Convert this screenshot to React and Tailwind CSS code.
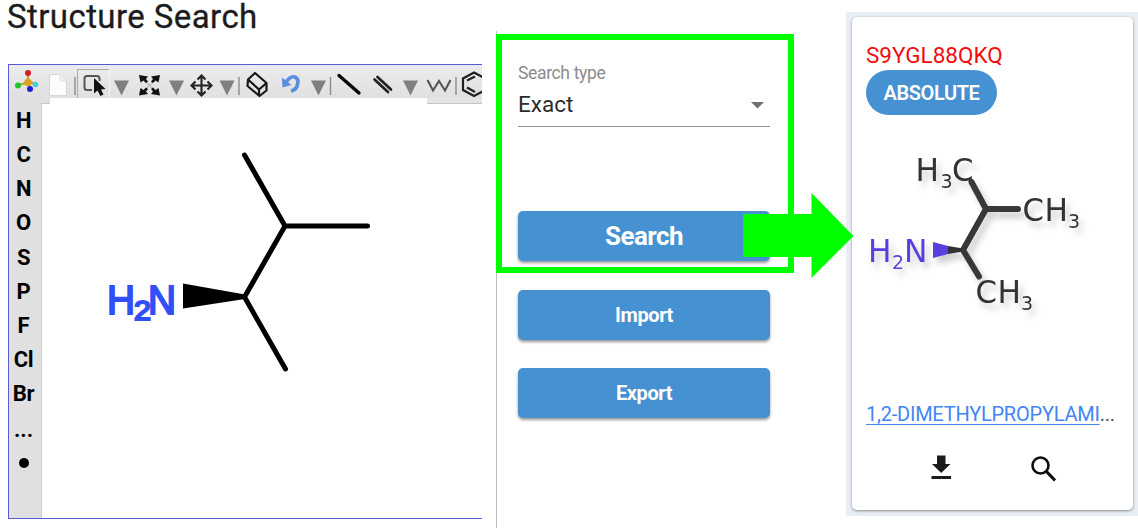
import React from "react";

const ELEMENTS = ["H", "C", "N", "O", "S", "P", "F", "Cl", "Br"];

function Tool({ x, w, children, className = "" }) {
  return (
    <svg className={`block shrink-0 ${className}`} width={w} height="33" viewBox={`${x} 65 ${w} 33`} fill="none">
      {children}
    </svg>
  );
}

function Arrow({ x, w, at }) {
  return (
    <Tool x={x} w={w}>
      <path d={`M${at - 7.5} 80.500h15L${at} 95.500z`} fill="#808080" />
    </Tool>
  );
}

function Sep({ x, w, at }) {
  return (
    <Tool x={x} w={w}>
      <path d={`M${at} 77v18`} stroke="#8b8b8b" strokeWidth="1.4" />
    </Tool>
  );
}

function Toolbar() {
  return (
    <div className="flex h-[33px] bg-linear-to-b from-[#ececec] to-[#e0e0e0]">
      <Tool x={9} w={37}>
        <path d="M28 82V73M28 82L18 85.500M28 82L36 84M28 82L30 89" stroke="#c4a12b" strokeWidth="2.200" />
        <circle cx="28" cy="73" r="3" fill="#d41b24" />
        <circle cx="28" cy="82.500" r="3.800" fill="#d9a51c" />
        <circle cx="18" cy="85.500" r="3" fill="#20c42c" />
        <circle cx="35.500" cy="84.500" r="2.800" fill="#3fd0dc" />
        <circle cx="30" cy="89" r="3" fill="#1a1fd0" />
      </Tool>
      <Tool x={46} w={26}>
        <path d="M49.500 74.500H60L66.500 81V95.500H49.500z" fill="#fcfcfc" stroke="#d6d6d6" strokeLinejoin="round" />
        <path d="M60 74.500V81H66.500" stroke="#dedede" fill="#f1f1f1" />
      </Tool>
      <Sep x={72} w={5} at={75} />
      <Tool x={77} w={33}>
        <path d="M77.500 98V69.500H109" stroke="#ababab" />
        <path d="M109.500 69V98" stroke="#f5f5f5" />
        <path d="M92 90H87Q84.500 90 84.500 87.500V78.500Q84.500 76 87 76H97Q99.500 76 99.500 78.500V81" stroke="#555" strokeWidth="2" />
        <path d="M94 78V93.500L97.500 90.500L100.500 96L103.500 94.500L101 89.500L105.500 89z" fill="#111" />
      </Tool>
      <Arrow x={110} w={23} at={121.500} />
      <Tool x={133} w={33}>
        <path d="M144 80L155 91M155 80L144 91" stroke="#bbb" strokeWidth="1.300" />
        <path d="M139 75L148 76.500L146 79L148 81.500L146 83L143.500 80.500L140.500 82.500zM160 75L151 76.500L153 79L151 81.500L153 83L155.500 80.500L158.500 82.500zM139 95.500L148 94L146 91.500L148 89L146 87.500L143.500 90L140.500 88zM160 95.500L151 94L153 91.500L151 89L153 87.500L155.500 90L158.500 88z" fill="#111" />
      </Tool>
      <Arrow x={166} w={22} at={176.500} />
      <Tool x={188} w={26}>
        <path d="M201.500 76V95M192 85.500H211M197.500 79.500L201.500 75.500L205.500 79.500M197.500 91.500L201.500 95.500L205.500 91.500M195.500 81.500L191.500 85.500L195.500 89.500M207.500 81.500L211.500 85.500L207.500 89.500" stroke="#222" strokeWidth="2.100" />
      </Tool>
      <Arrow x={214} w={21} at={227} />
      <Sep x={235} w={8} at={239} />
      <Tool x={243} w={29}>
        <path d="M248 79.500L255 73L266.500 83V90.500L259.500 96L247.500 86zM248 79.500L259 89.500L266.500 83M259 89.500V96" stroke="#171717" strokeWidth="2.200" strokeLinejoin="round" />
      </Tool>
      <Tool x={272} w={36}>
        <path d="M286 82.500Q290 75.500 295 77Q299.500 79 297 86.500Q295.500 90 291 91" stroke="#5a8fe0" strokeWidth="3.600" />
        <path d="M282 77.500L282.500 87.500L291.500 85z" fill="#5a8fe0" />
      </Tool>
      <Arrow x={308} w={20} at={318.500} />
      <Sep x={328} w={6} at={330.500} />
      <Tool x={334} w={30}>
        <path d="M339 75.500L359 93" stroke="#080808" strokeWidth="3.400" strokeLinecap="round" />
      </Tool>
      <Tool x={364} w={36}>
        <path d="M374.500 79.500L388 92M377.500 77L391 89.500" stroke="#222" strokeWidth="2.700" strokeLinecap="round" />
      </Tool>
      <Arrow x={400} w={22} at={410.500} />
      <Tool x={422} w={31}>
        <path d="M427.500 80L433 90.500L439 81L445 90.500L450.500 80" stroke="#555" strokeWidth="2.100" />
      </Tool>
      <Sep x={453} w={6} at={456} />
      <Tool x={459} w={23}>
        <path d="M474 72.500L485 78.500V90L474 96L463 90V78.500zM467 80.500L475 76.500M467 87.500L475 92" stroke="#222" strokeWidth="2.200" />
      </Tool>
    </div>
  );
}

function Editor() {
  return (
    <div className="ml-2 mt-[27px] flex h-[455px] w-[474px] flex-col border-y border-l border-[#5a5ad6]">
      <Toolbar />
      <div className="flex min-h-0 flex-1">
        <div className="flex w-[32px] shrink-0 flex-col items-center bg-[#e0e0e0] pr-[3px] pt-[6px] text-[22px] font-bold text-black">
          {ELEMENTS.map((e) => (
            <div key={e} className="flex h-[34.15px] w-[29px] shrink-0 items-center justify-center leading-none tracking-[-0.3px]">
              {e}
            </div>
          ))}
          <div className="flex h-[38px] shrink-0 items-center leading-none">...</div>
          <div className="mt-[9px] size-[10px] rounded-full bg-black" />
        </div>
        <div className="flex min-w-0 flex-1 flex-col">
          <div className="flex h-[6px] justify-between">
            <div className="w-[9px] border-b border-[#c6c6c6] bg-[#e0e0e0]" />
            <div className="w-[55px] border-b border-[#c6c6c6] bg-[#e4e4e4]" />
          </div>
          <div className="flex-1 border-l border-[#d0d0d0]">
            <svg className="block" width="440" height="412" viewBox="42 104 440 412">
              <path d="M244.500 155L285 226L367.500 226M285 226L244.500 297L285.500 369" fill="none" stroke="#000" strokeWidth="5" strokeLinecap="round" strokeLinejoin="round" />
              <path d="M183 283.500L245 294.500V299L183 308.500z" fill="#000" />
              <g fill="#304ff7" stroke="#304ff7" strokeWidth="2" fontFamily="Liberation Sans">
                <text x="107" y="313.500" fontSize="40" textLength="28" lengthAdjust="spacingAndGlyphs">H</text>
                <text x="134" y="320" fontSize="28" textLength="17" lengthAdjust="spacingAndGlyphs">2</text>
                <text x="148" y="313.500" fontSize="40" textLength="28" lengthAdjust="spacingAndGlyphs">N</text>
              </g>
            </svg>
          </div>
        </div>
      </div>
    </div>
  );
}

function ActionButton({ children, className }) {
  return (
    <button className={`flex h-[50px] w-[252px] items-center justify-center rounded-[5px] bg-[#4691d1] leading-none text-white shadow-[0_2px_3px_rgba(0,0,0,0.4)] ${className}`}>
      {children}
    </button>
  );
}

function SearchPanel() {
  return (
    <div className="flex w-[350px] shrink-0 flex-col border-l border-[#bdbdbd] pl-[21px]">
      <div className="mt-[32px] flex h-[20px] items-center text-[17.5px] tracking-[-0.35px] text-[#8c8c8c]">Search type</div>
      <div className="flex h-[44px] w-[252px] items-center justify-between border-b border-[#8f8f8f] pr-[6px] text-[22.500px] text-[#2b2b2b]">
        Exact
        <svg width="13" height="7" viewBox="0 0 13 7" className="mt-px">
          <path d="M0 0H13L6.500 6.500z" fill="#6f6f6f" />
        </svg>
      </div>
      <ActionButton className="mt-[84px] text-[26px] font-bold tracking-[-0.55px]">Search</ActionButton>
      <ActionButton className="mt-[29px] text-[20px] font-bold tracking-[-0.4px]">Import</ActionButton>
      <ActionButton className="mt-[28px] text-[20px] font-bold tracking-[-0.4px]">Export</ActionButton>
    </div>
  );
}

function CardMolecule() {
  return (
    <svg className="block" width="281" height="190" viewBox="852 140 281 190">
      <g style={{ filter: "drop-shadow(4px 6px 3px rgba(0,0,0,0.2))" }}>
        <path d="M971.500 182L986 209H1018M986 209L963 250L979 276.500" fill="none" stroke="#383838" strokeWidth="6" strokeLinecap="round" strokeLinejoin="round" />
        <path d="M933 242L948 246V254L933 258z" fill="#5a3fe0" />
        <path d="M948 246L963 248.500V251.500L948 254z" fill="#333" />
        <g fill="#333" fontFamily="DejaVu Sans">
          <text x="915.500" y="181" fontSize="32" textLength="23.500" lengthAdjust="spacingAndGlyphs">H</text>
          <text x="940.500" y="187.500" fontSize="19">3</text>
          <text x="952" y="181" fontSize="32" textLength="21.500" lengthAdjust="spacingAndGlyphs">C</text>
          <text x="1022.500" y="221" fontSize="32" textLength="21.500" lengthAdjust="spacingAndGlyphs">C</text>
          <text x="1044.500" y="221" fontSize="32" textLength="23.500" lengthAdjust="spacingAndGlyphs">H</text>
          <text x="1068" y="228" fontSize="19">3</text>
          <text x="975.500" y="303" fontSize="32" textLength="21.500" lengthAdjust="spacingAndGlyphs">C</text>
          <text x="997.500" y="303" fontSize="32" textLength="23.500" lengthAdjust="spacingAndGlyphs">H</text>
          <text x="1021" y="310" fontSize="19">3</text>
        </g>
        <g fill="#5a3fe0" fontFamily="DejaVu Sans">
          <text x="868" y="262" fontSize="32" textLength="23.500" lengthAdjust="spacingAndGlyphs">H</text>
          <text x="892" y="269" fontSize="19">2</text>
          <text x="904" y="262" fontSize="32" textLength="23.500" lengthAdjust="spacingAndGlyphs">N</text>
        </g>
      </g>
    </svg>
  );
}

function ResultCard() {
  return (
    <div className="mt-3 flex h-[504px] w-[292px] shrink-0 bg-[#e9eef4] pl-[6px] pt-[5px]">
      <div className="flex h-[493px] w-[281px] flex-col rounded-[5px] bg-white shadow-[0_1px_3px_rgba(0,0,0,0.4)]">
        <div className="ml-[14px] mt-[27px] flex h-[24px] items-center whitespace-nowrap text-[22.500px] text-[#f20d0d]">S9YGL88QKQ</div>
        <div className="ml-[14px] mt-[2px] flex h-[45px] w-[131px] items-center justify-center rounded-full bg-[#4691d1] text-[20px] font-semibold tracking-[-0.4px] text-white">ABSOLUTE</div>
        <div className="mt-[25px]">
          <CardMolecule />
        </div>
        <div className="ml-[14px] mt-[72px] flex h-[24px] items-center whitespace-nowrap text-[20px] tracking-[-0.23px] text-[#555]">
          <span className="text-[#4285f4] underline decoration-1 underline-offset-[3px]">1,2-DIMETHYLPROPYLAMI</span>...
        </div>
        <div className="mt-[26px] flex pl-[73px]">
          <svg width="32" height="32" viewBox="0 0 32 32">
            <path d="M12 3.500H20.500V12H25.500L16.200 21L7 12H12zM6.500 24H26V27H6.500z" fill="#1b1b1b" />
          </svg>
          <svg className="ml-[70px]" width="32" height="32" viewBox="0 0 32 32" fill="none" stroke="#0c0c0c">
            <circle cx="13.500" cy="13.500" r="8" strokeWidth="2.600" />
            <path d="M19.500 19.500L28 28.500" strokeWidth="3.200" />
          </svg>
        </div>
      </div>
    </div>
  );
}

export default function App() {
  return (
    <div className="relative flex h-[528px] w-[1138px] overflow-hidden bg-white font-['Roboto',sans-serif]">
      <div className="flex w-[495px] shrink-0 flex-col">
        <h1 className="ml-[7px] h-[37px] whitespace-nowrap text-[33px] leading-[33px] tracking-[0.42px] text-[#1c1c1c] [-webkit-text-stroke:0.3px_#1c1c1c]">Structure Search</h1>
        <Editor />
      </div>
      <div className="flex pl-px pt-[31px]">
        <SearchPanel />
      </div>
      <ResultCard />
      <div className="absolute left-[496px] top-[34px] h-[239px] w-[298px] border-[6px] border-[#00ff00]" />
      <svg className="absolute left-[743px] top-[193px]" width="111" height="85" viewBox="743 193 111 85">
        <path d="M743 214H811.500V193L853.500 236L811.500 278V257H743z" fill="#00ff00" />
      </svg>
    </div>
  );
}
